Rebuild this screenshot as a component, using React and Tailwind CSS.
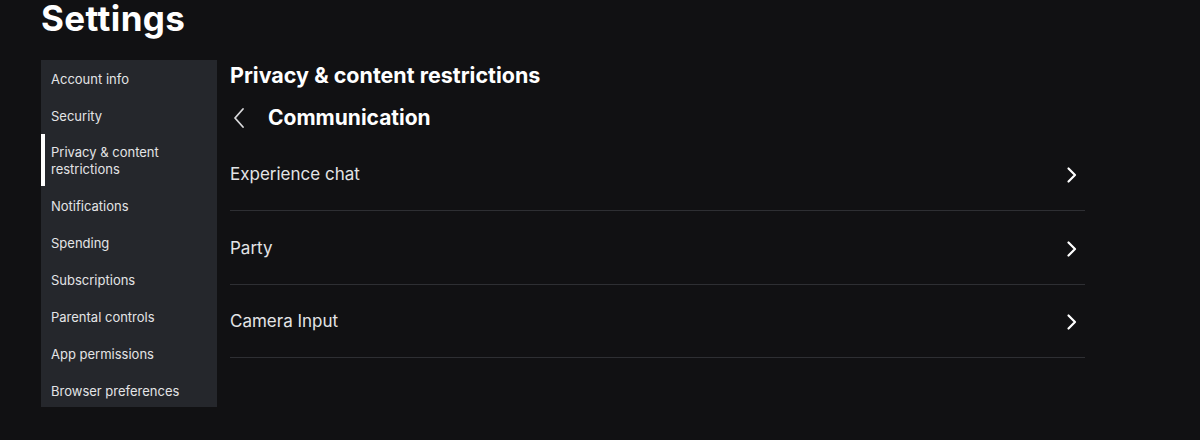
const navItems = [
  'Account info',
  'Security',
  'Privacy & content restrictions',
  'Notifications',
  'Spending',
  'Subscriptions',
  'Parental controls',
  'App permissions',
  'Browser preferences',
]

const rows = ['Experience chat', 'Party', 'Camera Input']

function ChevronRight() {
  return (
    <svg width="12" height="18" viewBox="0 0 12 18" fill="none">
      <path d="M2.5 2.5 L9 9 L2.5 15.5" stroke="#ffffff" strokeWidth="2.2" strokeLinecap="round" strokeLinejoin="round" />
    </svg>
  )
}

function ChevronLeft() {
  return (
    <svg width="14" height="22" viewBox="0 0 14 22" fill="none">
      <path d="M11 2 L3 11 L11 20" stroke="#d9d9db" strokeWidth="1.8" strokeLinecap="round" strokeLinejoin="round" />
    </svg>
  )
}

export default function App() {
  return (
    <div
      className="w-[1200px] h-[440px] bg-[#111113] text-white overflow-hidden"
      style={{ fontFamily: 'Inter, "Noto Sans", sans-serif' }}
    >
      <div className="pl-[41px]">
        <div className="h-[60px]">
          <h1 className="text-[35px] leading-[36px] font-bold tracking-[0.4px]">Settings</h1>
        </div>
        <div className="flex">
          <nav className="w-[176px] bg-[#25272c] flex flex-col h-[347px] shrink-0">
            {navItems.map((item, i) => {
              const active = item.startsWith('Privacy')
              return (
                <div
                  key={item}
                  className={`relative pl-[10px] pr-3 text-[13px] leading-[17px] text-[#e3e4e6] ${i < 2 ? 'pt-[11px] pb-[9px]' : 'py-[10px]'}`}
                >
                  {active && <span className="absolute left-0 top-0 bottom-[2px] w-[4px] bg-white" />}
                  {active ? (
                    <span>
                      Privacy &amp; content
                      <br />
                      restrictions
                    </span>
                  ) : (
                    item
                  )}
                </div>
              )
            })}
          </nav>
          <main className="pl-[13px] w-[868px]">
            <h2 className="text-[21.5px] leading-[28px] font-bold pt-[1px]">Privacy &amp; content restrictions</h2>
            <div className="flex items-center mt-[15px] h-[28px]">
              <div className="w-[38px] pl-[2px] flex items-center">
                <ChevronLeft />
              </div>
              <h3 className="text-[21px] leading-[28px] font-bold">Communication</h3>
            </div>
            <div className="mt-[5px]">
              {rows.map((row, i) => (
                <div
                  key={row}
                  className={`flex items-center justify-between border-b border-[#2e2f33] pr-[7px] pt-[2px] ${i === 2 ? 'h-[73px]' : 'h-[74px]'}`}
                >
                  <span className="text-[17px] text-[#e3e4e6]">{row}</span>
                  <ChevronRight />
                </div>
              ))}
            </div>
          </main>
        </div>
      </div>
    </div>
  )
}
